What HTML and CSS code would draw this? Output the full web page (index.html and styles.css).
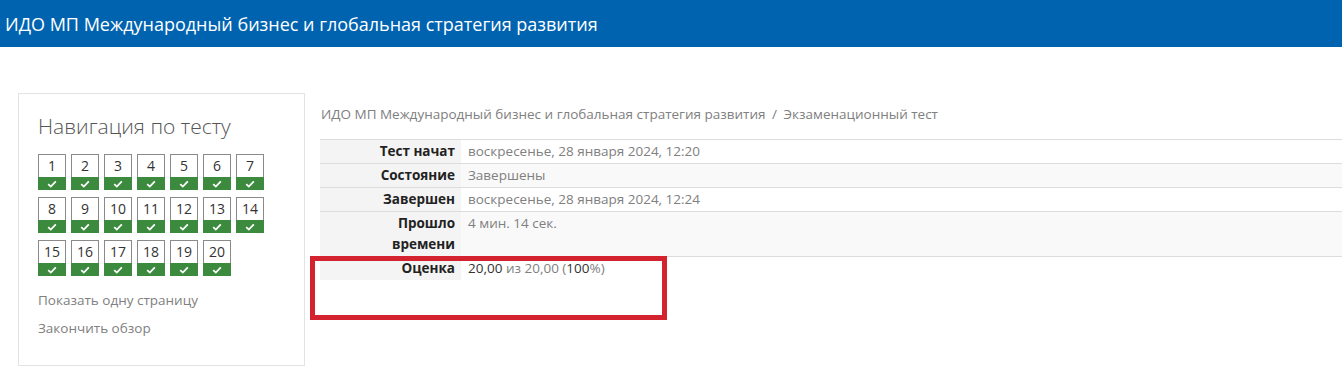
FILE: index.html
```html
<!DOCTYPE html>
<html lang="ru">
<head>
  <meta charset="UTF-8">
  <title>Экзаменационный тест</title>
  <link rel="stylesheet" href="styles.css">
</head>
<body>
  <header class="topbar">ИДО МП Международный бизнес и глобальная стратегия развития</header>

  <div class="page">
    <aside class="nav-block">
      <h2 class="nav-title">Навигация по тесту</h2>
      <div class="qn-grid" id="qnGrid"></div>
      <div class="nav-links">
        <a href="#">Показать одну страницу</a>
        <a href="#">Закончить обзор</a>
      </div>
    </aside>

    <main class="main">
      <div class="breadcrumb">
        <a href="#">ИДО МП Международный бизнес и глобальная стратегия развития</a>
        <span class="sep">/</span>
        <a href="#">Экзаменационный тест</a>
      </div>

      <div class="summary-wrap">
        <table class="summary">
          <tr>
            <th>Тест начат</th>
            <td>воскресенье, 28 января 2024, 12:20</td>
          </tr>
          <tr class="odd">
            <th>Состояние</th>
            <td>Завершены</td>
          </tr>
          <tr>
            <th>Завершен</th>
            <td>воскресенье, 28 января 2024, 12:24</td>
          </tr>
          <tr class="odd">
            <th>Прошло<br>времени</th>
            <td>4 мин. 14 сек.</td>
          </tr>
          <tr class="last">
            <th>Оценка</th>
            <td><b>20,00</b> из 20,00 (<b>100</b>%)</td>
          </tr>
        </table>
        <div class="highlight"></div>
      </div>
    </main>
  </div>

  <script>
    // build the 20 question buttons
    const grid = document.getElementById("qnGrid");
    for (let i = 1; i <= 20; i++) {
      const btn = document.createElement("a");
      btn.href = "#";
      btn.className = "qn";
      btn.innerHTML = `<span class="qn-num">${i}</span>
        <span class="qn-state">
          <svg width="10" height="8" viewBox="0 0 10 8"><polyline points="1.2,4.2 3.8,6.6 8.8,1.4" fill="none" stroke="#fff" stroke-width="1.8"/></svg>
        </span>`;
      grid.appendChild(btn);
    }
  </script>
</body>
</html>
```

FILE: styles.css
```css
* {
  box-sizing: border-box;
  margin: 0;
  padding: 0;
}

body {
  font-family: 'Open Sans', 'Noto Sans', sans-serif;
  font-size: 13.5px;
  color: #333;
  background: #fff;
  overflow: hidden;
}

a {
  color: #808080;
  text-decoration: none;
}

.topbar {
  background: #0063b0;
  color: #fff;
  height: 47px;
  padding: 12px 0 0 5px;
  font-size: 18px;
  line-height: 24px;
  white-space: nowrap;
}

.page {
  display: flex;
  gap: 15px;
  padding: 46px 0 0 18px;
}

.nav-block {
  flex: 0 0 287px;
  height: 273px;
  border: 1px solid #e3e3e3;
  padding: 17px 19px 19px;
}

.nav-title {
  font-size: 21px;
  font-weight: 300;
  line-height: 30px;
  color: #555;
  margin-bottom: 13px;
}

.qn-grid {
  display: grid;
  grid-template-columns: repeat(7, 28px);
  column-gap: 5px;
  row-gap: 7px;
}

.qn {
  display: flex;
  flex-direction: column;
  width: 28px;
  height: 36px;
  border: 1px solid #8a8a8a;
  border-bottom: none;
  color: #333;
}

.qn-num {
  height: 22px;
  line-height: 22px;
  text-align: center;
  font-size: 14px;
}

.qn-state {
  flex: 1;
  margin: 0 -1px;
  background: #3b8a3d;
  display: flex;
  align-items: center;
  justify-content: center;
}

.nav-links {
  display: flex;
  flex-direction: column;
  gap: 8px;
  margin-top: 14px;
  line-height: 20px;
}

.main {
  flex: 1;
  min-width: 0;
  padding-top: 10px;
}

.breadcrumb {
  padding-left: 1px;
  line-height: 22px;
  color: #808080;
  white-space: nowrap;
}

.breadcrumb .sep {
  margin: 0 3px;
}

.summary-wrap {
  position: relative;
  margin-top: 14px;
  width: 1030px;
}

.summary {
  width: 100%;
  border-collapse: collapse;
}

.summary th,
.summary td {
  border-top: 1px solid #ddd;
  line-height: 21px;
  padding: 1px 0 1px 7px;
  vertical-align: top;
}

.summary th {
  width: 141px;
  text-align: right;
  padding: 1px 6px 1px 0;
  background: #f4f4f4;
  font-weight: 700;
  color: #222;
}

.summary td {
  color: #808080;
}

.summary tr.odd td {
  background: #f9f9f9;
}

.summary td b {
  font-weight: 400;
  color: #333;
}

.highlight {
  position: absolute;
  left: -10px;
  top: 117px;
  width: 357px;
  height: 64px;
  border: 5px solid #d2232f;
}
```
